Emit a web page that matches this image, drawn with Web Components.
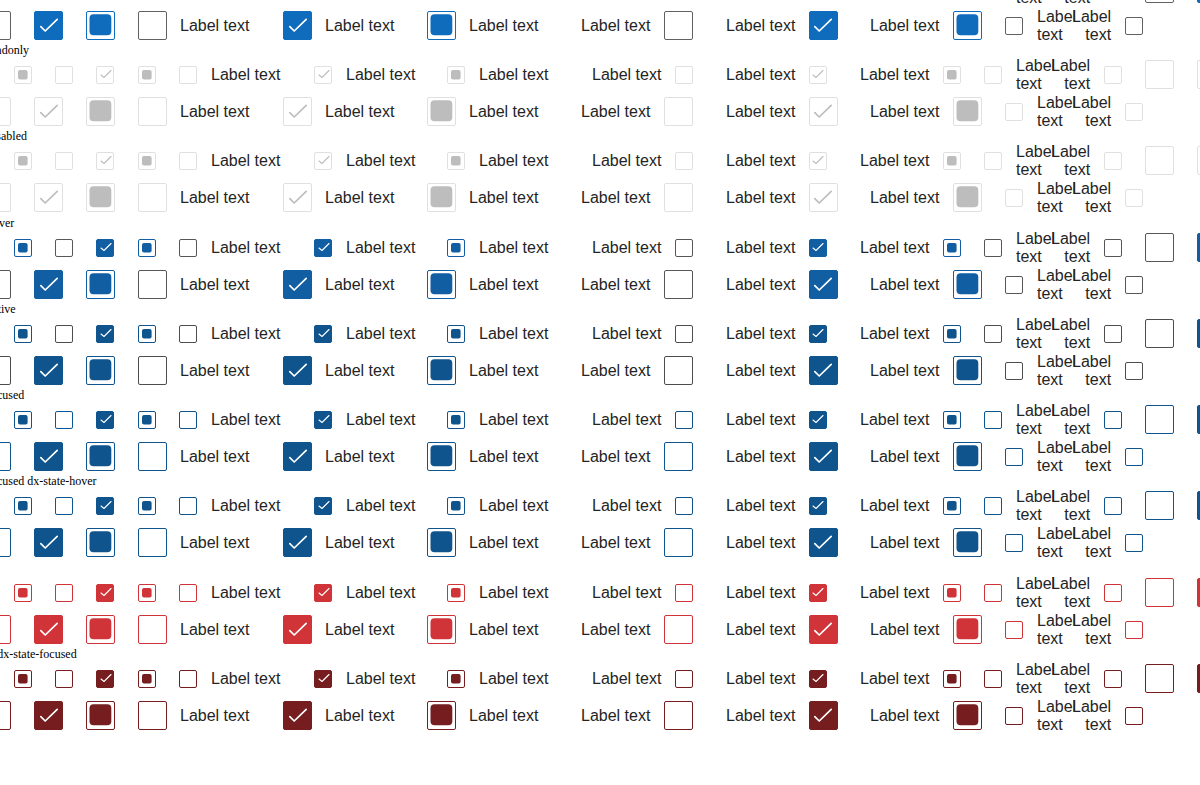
<!DOCTYPE html>
<html lang="en">
<head>
<meta charset="utf-8">
<title>Check box states</title>
<style>
body { margin: 0; background: #fff; overflow: hidden; }
</style>
</head>
<body>
<state-board>
  <state-group>
    <state-section></state-section>
    <state-section tone="muted">dx-state-readonly</state-section>
    <state-section tone="muted">dx-state-disabled</state-section>
  </state-group>
  <state-group>
    <state-section tone="hover">dx-state-hover</state-section>
    <state-section tone="active">dx-state-active</state-section>
    <state-section tone="focused">dx-state-focused</state-section>
    <state-section tone="focused">dx-state-focused dx-state-hover</state-section>
  </state-group>
  <state-group>
    <state-section tone="invalid">dx-invalid</state-section>
    <state-section tone="invalid-focused">dx-invalid dx-state-focused</state-section>
  </state-group>
</state-board>

<script>
/* The board is scrolled: its top left corner lies outside the window. */
class StateBoard extends HTMLElement {
  constructor() {
    super();
    this.attachShadow({ mode: 'open' }).innerHTML = `
      <style>
        :host { display: flex; flex-direction: column; gap: 1px; margin: -42px 0 0 -55px; }
      </style>
      <slot></slot>`;
  }
}

class StateGroup extends HTMLElement {
  constructor() {
    super();
    this.attachShadow({ mode: 'open' }).innerHTML = `
      <style>:host { display: flex; flex-direction: column; }</style>
      <slot></slot>`;
  }
}

/* One check box. mark: on | mixed | none; size: small | large; label is the slot. */
class CheckBox extends HTMLElement {
  constructor() {
    super();
    this.attachShadow({ mode: 'open' });
  }
  connectedCallback() {
    const mark = this.getAttribute('mark');
    const large = this.getAttribute('size') === 'large';
    const labelled = this.hasAttribute('labelled');
    const side = large ? 29 : 18;
    const shape = {
      on: large
        ? '<path d="M6.8 15.6 11.2 20 23.2 8.4" stroke-width="1.7"/>'
        : '<path d="M5 9 8 11.5 15 4.5" stroke-width="1.1"/>',
      mixed: large
        ? '<rect x="3.5" y="3.2" width="21.8" height="21" rx="4"/>'
        : '<rect x="4" y="4" width="9.6" height="9.6" rx="2"/>'
    }[mark] || '';
    this.shadowRoot.innerHTML = `
      <style>
        :host { display: block; }
        label {
          display: flex; align-items: center; gap: 14px; width: max-content;
          font: 16px/18px "Liberation Sans", Arial, sans-serif; color: #242424;
        }
        :host([size="large"]:not([reversed])) label { gap: 13px; }
        :host([reversed]) label { flex-direction: row-reverse; }
        :host([wrapped]) span { width: min-content; }
        :host([reversed]) span { text-align: right; }
        .box { display: grid; flex: none; }
        .box > * { grid-area: 1 / 1; }
        input {
          appearance: none; box-sizing: border-box; margin: 0;
          width: ${side}px; height: ${side}px;
          border: 1px solid var(--edge); border-radius: 2px; background: #fff;
        }
        input:checked { border-color: var(--on-edge); background: var(--on-fill); }
        input:indeterminate { border-color: var(--on-edge); background: #fff; }
        svg { pointer-events: none; }
        path { fill: none; stroke: var(--tick); stroke-linecap: round; stroke-linejoin: round; }
        :host([reversed]) path { transform: translate(-1px, 0); }
        rect { fill: var(--mixed); }
      </style>
      <label>
        <div class="box">
          <input type="checkbox"${mark === 'on' ? ' checked' : ''}${labelled ? '' : ' aria-label="Check box"'}>
          <svg width="${side}" height="${side}" viewBox="0 0 ${side} ${side}" aria-hidden="true">${shape}</svg>
        </div>
        ${labelled ? '<span><slot></slot></span>' : ''}
      </label>`;
    if (mark === 'mixed') this.shadowRoot.querySelector('input').indeterminate = true;
  }
}

const check = (size, mark, options) => options === undefined
  ? `<check-box size="${size}" mark="${mark}"></check-box>`
  : `<check-box size="${size}" mark="${mark}" labelled ${options}>Label text</check-box>`;

const labelledSet = size => [
  check(size, 'none', ''), check(size, 'on', ''), check(size, 'mixed', ''),
  check(size, 'none', 'reversed'), check(size, 'on', 'reversed'), check(size, 'mixed', 'reversed'),
  check('small', 'none', 'wrapped'), check('small', 'none', 'wrapped reversed')
].join('');

class StateSection extends HTMLElement {
  constructor() {
    super();
    this.attachShadow({ mode: 'open' }).innerHTML = `
      <style>
        :host {
          display: block;
          --edge: #616161; --on-edge: #0f6cbd; --on-fill: #0f6cbd; --mixed: #0f6cbd; --tick: #fff;
        }
        :host([tone="muted"]) {
          --edge: #e0e0e0; --on-edge: #e0e0e0; --on-fill: #fff; --mixed: #bdbdbd; --tick: #bdbdbd;
        }
        :host([tone="hover"]) {
          --edge: #575757; --on-edge: #115ea3; --on-fill: #115ea3; --mixed: #115ea3;
        }
        :host([tone="active"]) {
          --edge: #4d4d4d; --on-edge: #0f548c; --on-fill: #0f548c; --mixed: #0f548c;
        }
        :host([tone="focused"]) {
          --edge: #0f548c; --on-edge: #0f548c; --on-fill: #0f548c; --mixed: #0f548c;
        }
        :host([tone="invalid"]) {
          --edge: #d13438; --on-edge: #d13438; --on-fill: #d13438; --mixed: #d13438;
        }
        :host([tone="invalid-focused"]) {
          --edge: #751d1f; --on-edge: #751d1f; --on-fill: #751d1f; --mixed: #751d1f;
        }
        .caption {
          height: 12px; white-space: nowrap; color: #000;
          font: 12px/12px "Liberation Serif", "Times New Roman", serif;
        }
        .row { display: grid; align-items: center; height: 37px; }
        .small {
          padding-left: 69px;
          grid-template-columns: 41px 41px 42px 41px 135px 133px 145px 134px 134px 124px 67px 94px 52px 29px;
        }
        .large {
          padding-left: 37px;
          grid-template-columns: 52px 52px 52px 145px 144px 154px 145px 144px 135px 67px 94px;
        }
      </style>
      <div class="caption"><slot></slot></div>
      <div class="row small">
        ${check('small', 'mixed')}${check('small', 'none')}${check('small', 'on')}${check('small', 'mixed')}
        ${labelledSet('small')}
        ${check('large', 'none')}${check('large', 'on')}
      </div>
      <div class="row large">
        ${check('large', 'none')}${check('large', 'on')}${check('large', 'mixed')}
        ${labelledSet('large')}
      </div>`;
  }
}

customElements.define('check-box', CheckBox);
customElements.define('state-section', StateSection);
customElements.define('state-group', StateGroup);
customElements.define('state-board', StateBoard);
</script>
</body>
</html>
